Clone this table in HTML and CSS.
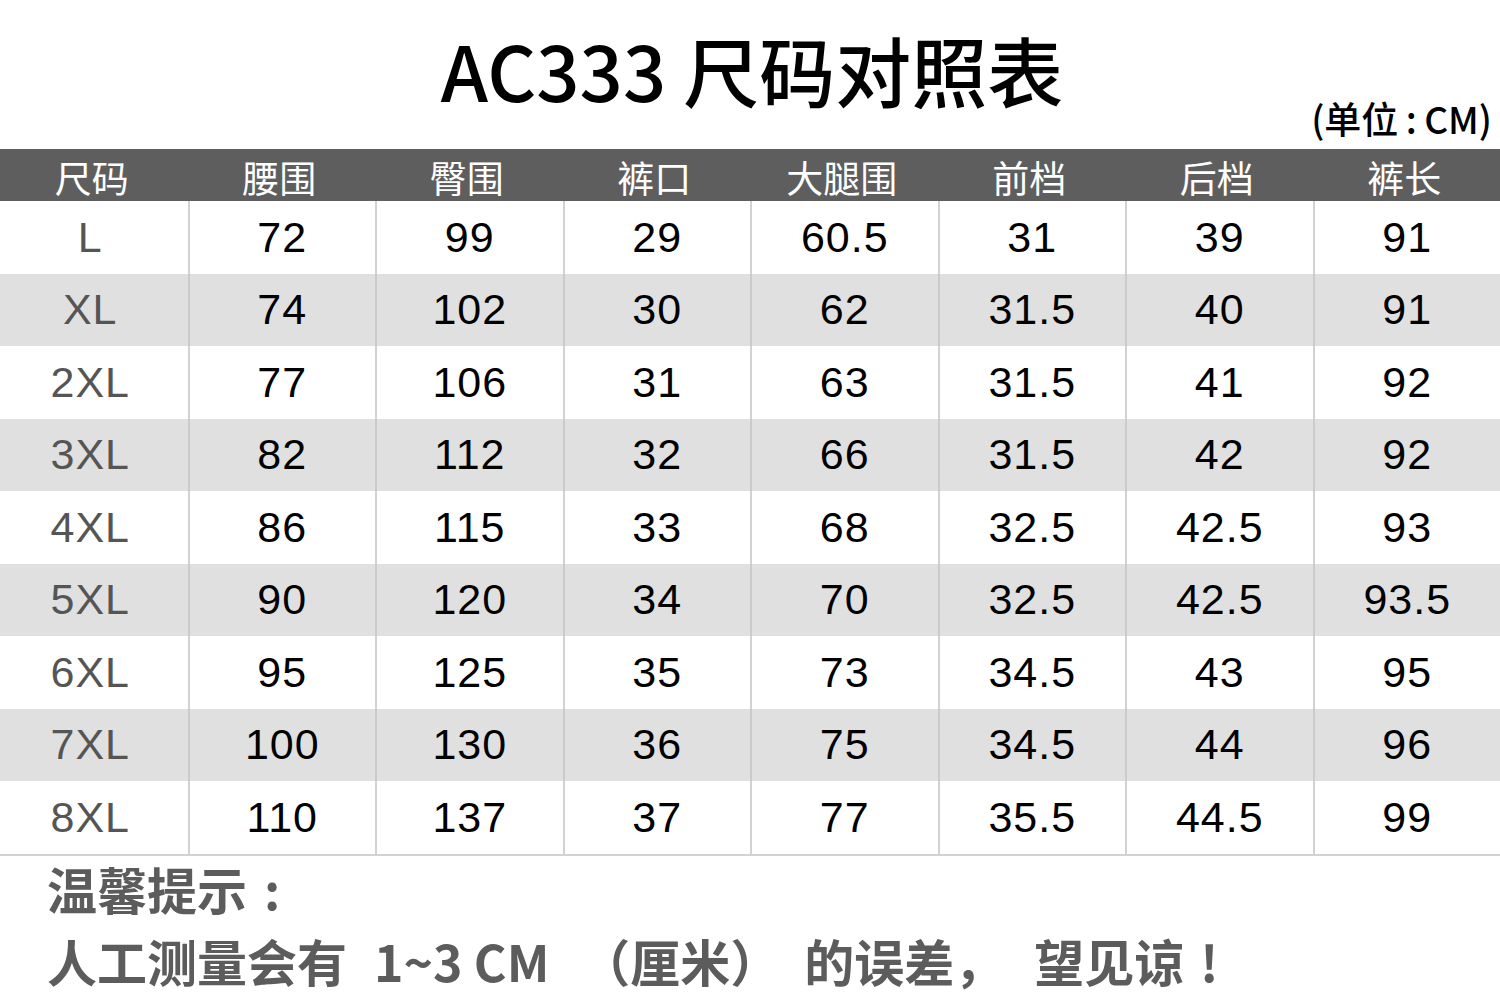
FILE: index.html
```html
<!DOCTYPE html>
<html lang="zh-CN">
<head>
<meta charset="utf-8">
<title>AC333 尺码对照表</title>
<link rel="stylesheet" href="styles.css">
</head>
<body>
<div class="page">
  <h1 class="title">AC333 尺码对照表</h1>
  <div class="unit">(单位<span class="ucolon">:</span>CM)</div>
  <div class="table">
    <div class="row head">
      <div class="cell">尺码</div><div class="cell">腰围</div><div class="cell">臀围</div><div class="cell">裤口</div><div class="cell">大腿围</div><div class="cell">前档</div><div class="cell">后档</div><div class="cell">裤长</div>
    </div>
    <div class="row">
      <div class="cell size">L</div><div class="cell">72</div><div class="cell">99</div><div class="cell">29</div><div class="cell">60.5</div><div class="cell">31</div><div class="cell">39</div><div class="cell">91</div>
    </div>
    <div class="row alt">
      <div class="cell size">XL</div><div class="cell">74</div><div class="cell">102</div><div class="cell">30</div><div class="cell">62</div><div class="cell">31.5</div><div class="cell">40</div><div class="cell">91</div>
    </div>
    <div class="row">
      <div class="cell size">2XL</div><div class="cell">77</div><div class="cell">106</div><div class="cell">31</div><div class="cell">63</div><div class="cell">31.5</div><div class="cell">41</div><div class="cell">92</div>
    </div>
    <div class="row alt">
      <div class="cell size">3XL</div><div class="cell">82</div><div class="cell">112</div><div class="cell">32</div><div class="cell">66</div><div class="cell">31.5</div><div class="cell">42</div><div class="cell">92</div>
    </div>
    <div class="row">
      <div class="cell size">4XL</div><div class="cell">86</div><div class="cell">115</div><div class="cell">33</div><div class="cell">68</div><div class="cell">32.5</div><div class="cell">42.5</div><div class="cell">93</div>
    </div>
    <div class="row alt">
      <div class="cell size">5XL</div><div class="cell">90</div><div class="cell">120</div><div class="cell">34</div><div class="cell">70</div><div class="cell">32.5</div><div class="cell">42.5</div><div class="cell">93.5</div>
    </div>
    <div class="row">
      <div class="cell size">6XL</div><div class="cell">95</div><div class="cell">125</div><div class="cell">35</div><div class="cell">73</div><div class="cell">34.5</div><div class="cell">43</div><div class="cell">95</div>
    </div>
    <div class="row alt">
      <div class="cell size">7XL</div><div class="cell">100</div><div class="cell">130</div><div class="cell">36</div><div class="cell">75</div><div class="cell">34.5</div><div class="cell">44</div><div class="cell">96</div>
    </div>
    <div class="row last">
      <div class="cell size">8XL</div><div class="cell">110</div><div class="cell">137</div><div class="cell">37</div><div class="cell">77</div><div class="cell">35.5</div><div class="cell">44.5</div><div class="cell">99</div>
    </div>
  </div>
  <div class="notes">
    <div class="note note1">温馨提示<span class="punct">:</span></div>
    <div class="note note2"><span class="seg">人工测量会有</span><span class="seg s1">1~3 CM</span><span class="seg s2">（厘米）</span><span class="seg s3">的误差，</span><span class="seg s4">望见谅<span class="punct">!</span></span></div>
  </div>
</div>
</body>
</html>
```
FILE: styles.css
```css
html, body {
  margin: 0;
  padding: 0;
  background: #ffffff;
}
body {
  width: 1500px;
  height: 995px;
  overflow: hidden;
  font-family: "Noto Sans CJK SC", "Noto Sans", sans-serif;
}
.page {
  display: flex;
  flex-direction: column;
}
.punct {
  display: inline-block;
  width: 1em;
  text-align: center;
}
.ucolon {
  display: inline-block;
  width: 0.7em;
  text-align: center;
}
.title {
  margin: 0;
  padding-top: 24px;
  font-size: 76px;
  line-height: 90px;
  font-weight: 500;
  color: #000;
  text-align: center;
  padding-left: 4px;
}
.unit {
  margin-top: -16px;
  margin-bottom: 11px;
  line-height: 40px;
  font-size: 37px;
  font-weight: 500;
  color: #000;
  text-align: right;
  padding-right: 8px;
}
.table {
  display: flex;
  flex-direction: column;
  border-bottom: 2px solid #d2d2d2;
}
.row {
  display: grid;
  grid-template-columns: repeat(8, 1fr);
  height: 72.5px;
  background: #ffffff;
}
.row.alt {
  background: #e0e0e0;
}
.row.head {
  height: 52px;
  background: #5e5e5e;
}
.cell {
  display: flex;
  align-items: center;
  justify-content: center;
  font-family: "Liberation Sans", Arial, sans-serif;
  font-size: 43px;
  letter-spacing: 1px;
  color: #000;
  box-sizing: border-box;
}
.row:not(.head) .cell + .cell {
  border-left: 2px solid #d2d2d2;
}
.row.alt .cell + .cell {
  border-left-color: #cbcbcb;
}
.row.head .cell {
  font-family: "Noto Sans CJK SC", sans-serif;
  font-size: 37px;
  letter-spacing: 0;
  color: #ffffff;
  padding-top: 1px;
  padding-right: 4px;
}
.cell.size {
  color: #555555;
  padding-right: 7px;
}
.notes {
  padding-left: 47px;
  color: #5c5c5c;
  font-weight: 700;
  font-size: 50px;
}
.note {
  line-height: 60px;
  white-space: nowrap;
}
.note1 {
  margin-top: 2px;
}
.note2 {
  margin-top: 12px;
}
.seg {
  display: inline-block;
}
.s1 { margin-left: 27px; }
.s2 { margin-left: 31px; }
.s3 { margin-left: 24px; }
.s4 { margin-left: 30px; }
```
